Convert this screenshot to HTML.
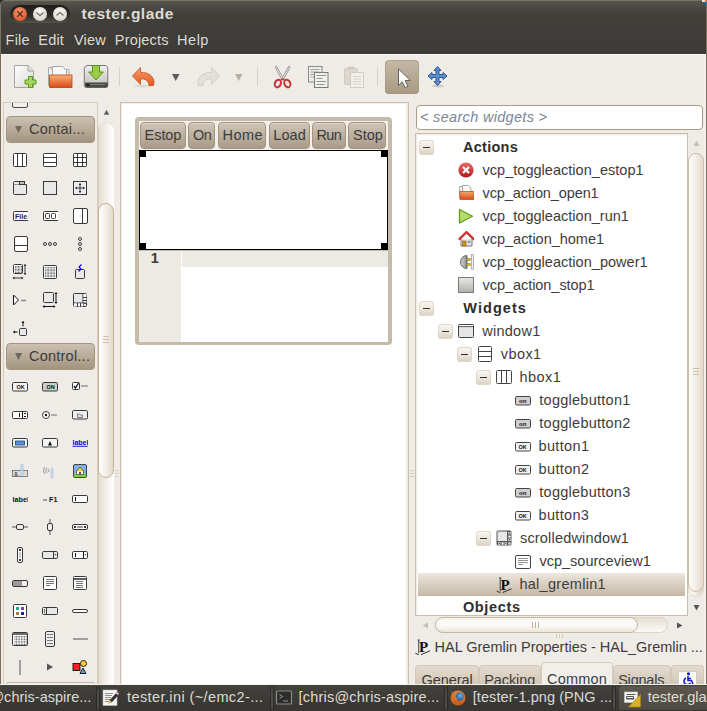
<!DOCTYPE html><html><head><meta charset="utf-8"><style>
html,body{margin:0;padding:0;}
body{width:707px;height:711px;overflow:hidden;position:relative;background:#efebe7;font-family:"Liberation Sans",sans-serif;}
div,span,svg{position:absolute;box-sizing:border-box;}
.t{white-space:nowrap;}
</style></head><body>
<div style="left:0px;top:0px;width:8px;height:8px;background:#2c2b28;"></div>
<div style="left:0px;top:0px;width:707px;height:54px;background:linear-gradient(#59564f 0px,#4d4b45 5px,#403f3a 14px,#3c3b37 53px,#2f2e2b 53px);border-radius:5px 5px 0 0;border-top:1px solid #7a7262;border-left:1px solid #7d7361;border-right:1px solid #7d7361;"></div>
<div style="left:1px;top:54px;width:705px;height:1px;background:#faf7f1;"></div>
<span class="t" style="left:81.61px;top:5.68px;font-size:15.5px;line-height:15.5px;color:#dfdbd2;letter-spacing:0.515px;font-weight:bold;">tester.glade</span>
<span class="t" style="left:5.61px;top:33.33px;font-size:14.5px;line-height:14.5px;color:#dfdbd2;letter-spacing:0.218px;">File</span>
<span class="t" style="left:38.31px;top:33.33px;font-size:14.5px;line-height:14.5px;color:#dfdbd2;letter-spacing:0.202px;">Edit</span>
<span class="t" style="left:73.94px;top:33.33px;font-size:14.5px;line-height:14.5px;color:#dfdbd2;letter-spacing:0.218px;">View</span>
<span class="t" style="left:114.81px;top:33.33px;font-size:14.5px;line-height:14.5px;color:#dfdbd2;letter-spacing:0.191px;">Projects</span>
<span class="t" style="left:177.11px;top:33.33px;font-size:14.5px;line-height:14.5px;color:#dfdbd2;letter-spacing:0.495px;">Help</span>
<div style="left:0px;top:54px;width:1px;height:631px;background:#7b6d56;"></div>
<div style="left:706px;top:54px;width:1px;height:631px;background:#7e7058;"></div>
<div style="left:705px;top:55px;width:1px;height:629px;background:#f7f4ef;"></div>
<div style="left:3px;top:102px;width:95px;height:582px;border:1px solid #d6ccb9;border-bottom:none;"></div>
<div style="left:98px;top:122px;width:16px;height:562px;background:linear-gradient(90deg,#d3c6b1 0px,#e6ded1 1.5px,#f3efe9 8px,#ffffff 15px);border-radius:8px 8px 0 0;box-shadow:inset 0 1px 0 #e9e2d6;"></div>
<div style="left:98px;top:203px;width:16px;height:275px;background:linear-gradient(90deg,#ffffff,#f3efe8 7px,#e2d9ca 14px);border:1px solid #c4b49a;border-radius:8px;"></div>
<svg style="left:103px;top:109px" width="7" height="7"><path d="M3.5 0.8L6.2 5.8H0.8z" fill="#5e5e5e"/></svg>
<div style="left:120px;top:102px;width:289px;height:582px;background:#fff;border:1px solid #cdbfa9;border-bottom:none;box-shadow:inset 1px 1px 0 #f1ede6,inset -2px 0 0 #f1ede6;"></div>
<div style="left:416px;top:105px;width:287px;height:25px;background:#fff;border:1px solid #a89c86;border-radius:4px;"></div>
<span class="t" style="left:419.97px;top:110.13px;font-size:14.5px;line-height:14.5px;color:#7c8593;letter-spacing:0.318px;font-style:italic;">&lt; search widgets &gt;</span>
<div style="left:415px;top:133px;width:273px;height:483px;background:#fff;border:1px solid #cbbfa9;box-shadow:inset 1px 1px 0 #f1ece4,inset 2px 2px 0 #fbf9f6;"></div>
<div style="left:688px;top:153px;width:16px;height:444px;background:linear-gradient(90deg,#fbfaf8,#f1ece4 50%,#dcd2c2);border-radius:8px;border:1px solid #e3dbce;"></div>
<div style="left:688px;top:153px;width:16px;height:439px;background:linear-gradient(90deg,#fdfcfb,#f5f1eb 40%,#e2d9cb);border:1px solid #cdbfa8;border-radius:8px;"></div>
<div style="left:435px;top:617px;width:233px;height:16px;background:linear-gradient(#e6dfd3,#fbfaf8);border-radius:8px;border:1px solid #ddd4c4;"></div>
<div style="left:435px;top:617px;width:203px;height:16px;background:linear-gradient(#f6f3ef,#fdfcfb 50%,#ebe5db);border:1px solid #c4b8a2;border-radius:8px;"></div>
<div style="left:418px;top:573px;width:267px;height:23px;background:linear-gradient(#ece6dc,#c4b7a5);"></div>
<span class="t" style="left:463.02px;top:139.73px;font-size:14.5px;line-height:14.5px;color:#2e2e2e;letter-spacing:0.267px;font-weight:bold;">Actions</span>
<span class="t" style="left:482.54px;top:162.73px;font-size:14.5px;line-height:14.5px;color:#3c3c3c;letter-spacing:0.028px;">vcp_toggleaction_estop1</span>
<span class="t" style="left:482.54px;top:185.73px;font-size:14.5px;line-height:14.5px;color:#3c3c3c;letter-spacing:-0.104px;">vcp_action_open1</span>
<span class="t" style="left:482.54px;top:208.73px;font-size:14.5px;line-height:14.5px;color:#3c3c3c;letter-spacing:0.023px;">vcp_toggleaction_run1</span>
<span class="t" style="left:482.54px;top:231.73px;font-size:14.5px;line-height:14.5px;color:#3c3c3c;letter-spacing:-0.017px;">vcp_action_home1</span>
<span class="t" style="left:482.54px;top:254.73px;font-size:14.5px;line-height:14.5px;color:#3c3c3c;letter-spacing:0.027px;">vcp_toggleaction_power1</span>
<span class="t" style="left:482.54px;top:277.73px;font-size:14.5px;line-height:14.5px;color:#3c3c3c;letter-spacing:-0.048px;">vcp_action_stop1</span>
<span class="t" style="left:463.37px;top:300.73px;font-size:14.5px;line-height:14.5px;color:#2e2e2e;letter-spacing:1.041px;font-weight:bold;">Widgets</span>
<span class="t" style="left:482.23px;top:323.73px;font-size:14.5px;line-height:14.5px;color:#3c3c3c;letter-spacing:0.260px;">window1</span>
<span class="t" style="left:500.84px;top:346.73px;font-size:14.5px;line-height:14.5px;color:#3c3c3c;letter-spacing:0.417px;">vbox1</span>
<span class="t" style="left:519.38px;top:369.73px;font-size:14.5px;line-height:14.5px;color:#3c3c3c;letter-spacing:0.453px;">hbox1</span>
<span class="t" style="left:539.30px;top:392.73px;font-size:14.5px;line-height:14.5px;color:#3c3c3c;letter-spacing:0.261px;">togglebutton1</span>
<span class="t" style="left:539.30px;top:415.73px;font-size:14.5px;line-height:14.5px;color:#3c3c3c;letter-spacing:0.263px;">togglebutton2</span>
<span class="t" style="left:538.57px;top:438.73px;font-size:14.5px;line-height:14.5px;color:#3c3c3c;letter-spacing:0.342px;">button1</span>
<span class="t" style="left:538.57px;top:461.73px;font-size:14.5px;line-height:14.5px;color:#3c3c3c;letter-spacing:0.347px;">button2</span>
<span class="t" style="left:539.30px;top:484.73px;font-size:14.5px;line-height:14.5px;color:#3c3c3c;letter-spacing:0.256px;">togglebutton3</span>
<span class="t" style="left:538.57px;top:507.73px;font-size:14.5px;line-height:14.5px;color:#3c3c3c;letter-spacing:0.332px;">button3</span>
<span class="t" style="left:519.99px;top:530.73px;font-size:14.5px;line-height:14.5px;color:#3c3c3c;letter-spacing:0.181px;">scrolledwindow1</span>
<span class="t" style="left:539.44px;top:553.73px;font-size:14.5px;line-height:14.5px;color:#3c3c3c;letter-spacing:0.010px;">vcp_sourceview1</span>
<span class="t" style="left:519.38px;top:576.73px;font-size:14.5px;line-height:14.5px;color:#3c3c3c;letter-spacing:0.289px;">hal_gremlin1</span>
<span class="t" style="left:462.92px;top:599.73px;font-size:14.5px;line-height:14.5px;color:#2e2e2e;letter-spacing:0.662px;font-weight:bold;">Objects</span>
<span class="t" style="left:434.61px;top:639.53px;font-size:14.5px;line-height:14.5px;color:#3c3c3c;letter-spacing:-0.010px;">HAL Gremlin Properties - HAL_Gremlin ...</span>
<div style="left:415px;top:665px;width:64px;height:19px;background:linear-gradient(#e3dbcf,#d3c8b7);border:1px solid #d3c8b6;border-bottom:none;border-radius:4px 4px 0 0;"></div>
<div style="left:479px;top:665px;width:62px;height:19px;background:linear-gradient(#e3dbcf,#d3c8b7);border:1px solid #d3c8b6;border-bottom:none;border-radius:4px 4px 0 0;"></div>
<div style="left:541px;top:662px;width:72px;height:22px;background:#f2efeb;border:1px solid #d6ccbc;border-bottom:none;border-radius:4px 4px 0 0;"></div>
<div style="left:613px;top:665px;width:58px;height:19px;background:linear-gradient(#e3dbcf,#d3c8b7);border:1px solid #d3c8b6;border-bottom:none;border-radius:4px 4px 0 0;"></div>
<div style="left:671px;top:665px;width:33px;height:19px;background:linear-gradient(#e3dbcf,#d3c8b7);border:1px solid #d3c8b6;border-bottom:none;border-radius:4px 4px 0 0;"></div>
<span class="t" style="left:421.57px;top:672.73px;font-size:14.5px;line-height:14.5px;color:#3c3c3c;letter-spacing:-0.085px;">General</span>
<span class="t" style="left:484.31px;top:672.73px;font-size:14.5px;line-height:14.5px;color:#3c3c3c;letter-spacing:-0.112px;">Packing</span>
<span class="t" style="left:547.07px;top:671.73px;font-size:14.5px;line-height:14.5px;color:#3c3c3c;letter-spacing:0.208px;">Common</span>
<span class="t" style="left:618.13px;top:672.73px;font-size:14.5px;line-height:14.5px;color:#3c3c3c;letter-spacing:-0.195px;">Signals</span>
<div style="left:135px;top:117px;width:257px;height:228px;background:#c6baa9;border-radius:4px;"></div>
<div style="left:139px;top:121px;width:249px;height:29px;background:#f3f0eb;"></div>
<div style="left:140.4px;top:122px;width:45.19999999999999px;height:27px;background:linear-gradient(#cfc5b7,#a99b87);border:1px solid #a09380;border-radius:4px;box-shadow:inset 0 1px 0 #ddd5c9;"></div>
<span class="t" style="left:144.61px;top:127.73px;font-size:14.5px;line-height:14.5px;color:#3c3c3c;letter-spacing:-0.073px;">Estop</span>
<div style="left:188.2px;top:122px;width:27.200000000000017px;height:27px;background:linear-gradient(#cfc5b7,#a99b87);border:1px solid #a09380;border-radius:4px;box-shadow:inset 0 1px 0 #ddd5c9;"></div>
<span class="t" style="left:193.00px;top:127.73px;font-size:14.5px;line-height:14.5px;color:#3c3c3c;letter-spacing:-0.619px;">On</span>
<div style="left:218.2px;top:122px;width:48.19999999999999px;height:27px;background:linear-gradient(#cfc5b7,#a99b87);border:1px solid #a09380;border-radius:4px;box-shadow:inset 0 1px 0 #ddd5c9;"></div>
<span class="t" style="left:222.41px;top:127.73px;font-size:14.5px;line-height:14.5px;color:#3c3c3c;letter-spacing:0.514px;">Home</span>
<div style="left:269.4px;top:122px;width:40.30000000000001px;height:27px;background:linear-gradient(#cfc5b7,#a99b87);border:1px solid #a09380;border-radius:4px;box-shadow:inset 0 1px 0 #ddd5c9;"></div>
<span class="t" style="left:273.31px;top:127.73px;font-size:14.5px;line-height:14.5px;color:#3c3c3c;letter-spacing:0.090px;">Load</span>
<div style="left:312.3px;top:122px;width:33.5px;height:27px;background:linear-gradient(#cfc5b7,#a99b87);border:1px solid #a09380;border-radius:4px;box-shadow:inset 0 1px 0 #ddd5c9;"></div>
<span class="t" style="left:316.41px;top:127.73px;font-size:14.5px;line-height:14.5px;color:#3c3c3c;letter-spacing:-0.588px;">Run</span>
<div style="left:348.4px;top:122px;width:38.10000000000002px;height:27px;background:linear-gradient(#cfc5b7,#a99b87);border:1px solid #a09380;border-radius:4px;box-shadow:inset 0 1px 0 #ddd5c9;"></div>
<span class="t" style="left:353.03px;top:127.73px;font-size:14.5px;line-height:14.5px;color:#3c3c3c;letter-spacing:0.012px;">Stop</span>
<div style="left:139px;top:150px;width:249px;height:100px;background:#fff;border:1px solid #000;"></div>
<div style="left:139px;top:150px;width:7px;height:7px;background:#000;"></div>
<div style="left:381px;top:150px;width:7px;height:7px;background:#000;"></div>
<div style="left:139px;top:243px;width:7px;height:7px;background:#000;"></div>
<div style="left:381px;top:243px;width:7px;height:7px;background:#000;"></div>
<div style="left:139px;top:251px;width:42px;height:91px;background:#ede9e3;"></div>
<div style="left:182px;top:251px;width:206px;height:16px;background:#ede9e3;"></div>
<div style="left:181px;top:251px;width:1px;height:91px;background:#fff;"></div>
<div style="left:181px;top:267px;width:207px;height:75px;background:#fff;"></div>
<span class="t" style="left:150.70px;top:250.63px;font-size:14.5px;line-height:14.5px;color:#3c3b37;font-weight:bold;">1</span>
<div style="left:6px;top:116px;width:89px;height:27px;background:linear-gradient(#cbc1b2,#a3957f);border:1px solid #a5977f;border-radius:4px;"></div>
<svg style="left:14px;top:125px" width="9" height="9"><path d="M1 1 L8 1 L4.5 8 Z" fill="#6e675d"/></svg>
<span class="t" style="left:28.97px;top:122.13px;font-size:14.5px;line-height:14.5px;color:#3c3c3c;letter-spacing:0.233px;">Contai...</span>
<div style="left:6px;top:343px;width:89px;height:27px;background:linear-gradient(#cbc1b2,#a3957f);border:1px solid #a5977f;border-radius:4px;"></div>
<svg style="left:14px;top:352px" width="9" height="9"><path d="M1 1 L8 1 L4.5 8 Z" fill="#6e675d"/></svg>
<span class="t" style="left:28.97px;top:349.13px;font-size:14.5px;line-height:14.5px;color:#3c3c3c;letter-spacing:0.235px;">Control...</span>
<div style="left:6px;top:682px;width:89px;height:4px;border:1px solid #c3b7a3;border-radius:4px;"></div>
<div style="left:0px;top:685px;width:707px;height:26px;background:linear-gradient(#42413c,#3a3935 60%,#363531);"></div>
<div style="left:0px;top:684px;width:707px;height:1px;background:#f4f2ee;"></div>
<div style="left:619px;top:686px;width:88px;height:24px;background:linear-gradient(#5d574e,#4e4a43);border-radius:4px 0 0 0;"></div>
<div style="left:96px;top:686px;width:1px;height:25px;background:#2c2b28;"></div>
<div style="left:97px;top:687px;width:2px;height:23px;background:linear-gradient(#3f3e3a,#4e4d48 20%,#4e4d48 80%,#3f3e3a);"></div>
<div style="left:99px;top:686px;width:1px;height:25px;background:#2c2b28;"></div>
<div style="left:270px;top:686px;width:1px;height:25px;background:#2c2b28;"></div>
<div style="left:271px;top:687px;width:2px;height:23px;background:linear-gradient(#3f3e3a,#4e4d48 20%,#4e4d48 80%,#3f3e3a);"></div>
<div style="left:273px;top:686px;width:1px;height:25px;background:#2c2b28;"></div>
<div style="left:444px;top:686px;width:1px;height:25px;background:#2c2b28;"></div>
<div style="left:445px;top:687px;width:2px;height:23px;background:linear-gradient(#3f3e3a,#4e4d48 20%,#4e4d48 80%,#3f3e3a);"></div>
<div style="left:447px;top:686px;width:1px;height:25px;background:#2c2b28;"></div>
<div style="left:612px;top:686px;width:1px;height:25px;background:#2c2b28;"></div>
<div style="left:613px;top:687px;width:2px;height:23px;background:linear-gradient(#3f3e3a,#4e4d48 20%,#4e4d48 80%,#3f3e3a);"></div>
<div style="left:615px;top:686px;width:1px;height:25px;background:#2c2b28;"></div>
<svg style="left:0;top:684px" width="707" height="27" viewBox="0 684 707 27">
<defs><linearGradient id="ffo" x1="0" y1="0" x2="0" y2="1"><stop offset="0" stop-color="#e88a2a"/><stop offset="1" stop-color="#c8561a"/></linearGradient>
<radialGradient id="ffb" cx="0.6" cy="0.4" r="0.6"><stop offset="0" stop-color="#6ab0e0"/><stop offset="1" stop-color="#1f5a9a"/></radialGradient></defs>
<!-- text editor -->
<rect x="103" y="690" width="14" height="15.5" fill="#f4f4f2" stroke="#bbb" stroke-width="0.6"/>
<path d="M105 693.5h8M105 695.5h7M105 697.5h6M105 699.5h5M105 701.5h4" stroke="#777" stroke-width="0.8"/>
<path d="M108.5 703.5l1.2-3.5 6.5-7 2.2 2.2-6.5 7z" fill="#333"/>
<path d="M115.5 693l1.5-1.5 2.2 2.2-1.5 1.5z" fill="#e8a0d8"/>
<path d="M108.5 703.5l1.2-3.5 2.2 2.2z" fill="#e8d060"/>
<!-- terminal -->
<rect x="276.5" y="691" width="15" height="13" rx="1" fill="#2c2c2a" stroke="#8a8a86" stroke-width="1.2"/>
<path d="M279.5 694.5l3 2-3 2" fill="none" stroke="#aaa" stroke-width="0.9"/>
<path d="M283 701h5" stroke="#8a9aaa" stroke-width="1"/>
<!-- firefox -->
<circle cx="458" cy="698" r="7.5" fill="url(#ffo)"/>
<circle cx="459.5" cy="696.5" r="4.2" fill="url(#ffb)"/>
<path d="M451 691l3 3 3-1-1.5 4 2.5 2-3 2z" fill="#d8782a"/>
<!-- glade -->
<rect x="624.5" y="692" width="13" height="10.5" fill="#f6f6f4" stroke="#ccc" stroke-width="0.6"/>
<path d="M626.5 694.5h9M626.5 699h8M626.5 696.5h7v2h-7z" fill="none" stroke="#444" stroke-width="0.9"/>
<path d="M640.5 694.5v12.5h-12z" fill="#d8b020" stroke="#a88810" stroke-width="0.6"/>
</svg>
<span class="t" style="left:-10.63px;top:689.93px;font-size:14.5px;line-height:14.5px;color:#dfdbd2;letter-spacing:0.016px;">@chris-aspire...</span>
<span class="t" style="left:127.10px;top:689.93px;font-size:14.5px;line-height:14.5px;color:#dfdbd2;letter-spacing:0.391px;">tester.ini (~/emc2-...</span>
<span class="t" style="left:298.56px;top:689.93px;font-size:14.5px;line-height:14.5px;color:#dfdbd2;letter-spacing:0.209px;">[chris@chris-aspire...</span>
<span class="t" style="left:472.76px;top:689.93px;font-size:14.5px;line-height:14.5px;color:#dfdbd2;letter-spacing:0.070px;">[tester-1.png (PNG ...</span>
<span class="t" style="left:647.70px;top:689.93px;font-size:14.5px;line-height:14.5px;color:#dfdbd2;">tester.glade</span>
<svg style="left:12px;top:152px" width="16" height="16" viewBox="0 0 16 16"><rect x="1.5" y="1.5" width="13" height="13" rx="1" fill="#fff" stroke="#383838"/><path d="M5.5 2v12M10.5 2v12" stroke="#383838"/></svg>
<svg style="left:42px;top:152px" width="16" height="16" viewBox="0 0 16 16"><rect x="1.5" y="1.5" width="13" height="13" rx="1" fill="#fff" stroke="#383838"/><path d="M2 5.5h12M2 10.5h12" stroke="#383838"/></svg>
<svg style="left:72px;top:152px" width="16" height="16" viewBox="0 0 16 16"><rect x="1.5" y="1.5" width="13" height="13" rx="1" fill="#fff" stroke="#383838"/><path d="M5.5 2v12M10.5 2v12M2 5.5h12M2 10.5h12" stroke="#383838"/></svg>
<svg style="left:12px;top:180px" width="16" height="16" viewBox="0 0 16 16"><path d="M1.5 4.5h13v9a1 1 0 0 1-1 1h-11a1 1 0 0 1-1-1z" fill="#e8e8e8" stroke="#383838"/><path d="M1.5 4.5v-2a1 1 0 0 1 1-1h5l1 3" fill="#e8e8e8" stroke="#383838"/><rect x="7.5" y="1.5" width="5" height="3" fill="#bbb" stroke="#383838"/></svg>
<svg style="left:42px;top:180px" width="16" height="16" viewBox="0 0 16 16"><rect x="1.5" y="1.5" width="13" height="13" fill="#e8e8e8" stroke="#383838"/></svg>
<svg style="left:72px;top:180px" width="16" height="16" viewBox="0 0 16 16"><rect x="1.5" y="1.5" width="13" height="13" fill="#eee" stroke="#383838"/><path d="M8 3.5v9M3.5 8h9" stroke="#383838"/><path d="M8 3l-1.5 2h3zM8 13l-1.5-2h3zM3 8l2-1.5v3zM13 8l-2-1.5v3z" fill="#383838"/></svg>
<svg style="left:12px;top:208px" width="16" height="16" viewBox="0 0 16 16"><path d="M16 3.5H2.5a1 1 0 0 0-1 1v7a1 1 0 0 0 1 1H16" fill="#fff" stroke="#383838"/><text x="3" y="10.5" font-family="Liberation Sans" font-weight="bold" font-size="7" fill="#222">File</text></svg>
<svg style="left:42px;top:208px" width="16" height="16" viewBox="0 0 16 16"><path d="M16 3.5H2.5a1 1 0 0 0-1 1v7a1 1 0 0 0 1 1H16" fill="#fff" stroke="#383838"/><rect x="3.5" y="5.5" width="4" height="5" rx="1" fill="none" stroke="#383838"/><rect x="9.5" y="5.5" width="4" height="5" rx="1" fill="none" stroke="#383838"/></svg>
<svg style="left:72px;top:208px" width="16" height="16" viewBox="0 0 16 16"><rect x="1.5" y="0.5" width="14" height="15" rx="1.5" fill="#fff" stroke="#383838"/><path d="M10.5 1v14" stroke="#383838"/></svg>
<svg style="left:12px;top:236px" width="16" height="16" viewBox="0 0 16 16"><rect x="2.5" y="0.5" width="13" height="15" rx="1.5" fill="#fff" stroke="#383838"/><path d="M3 9.5h12" stroke="#383838"/></svg>
<svg style="left:42px;top:236px" width="16" height="16" viewBox="0 0 16 16"><circle cx="3" cy="8" r="1.5" fill="none" stroke="#383838"/><circle cx="8" cy="8" r="1.5" fill="none" stroke="#383838"/><circle cx="13" cy="8" r="1.5" fill="none" stroke="#383838"/></svg>
<svg style="left:72px;top:236px" width="16" height="16" viewBox="0 0 16 16"><circle cx="8" cy="3" r="1.5" fill="none" stroke="#383838"/><circle cx="8" cy="8" r="1.5" fill="none" stroke="#383838"/><circle cx="8" cy="13" r="1.5" fill="none" stroke="#383838"/></svg>
<svg style="left:12px;top:264px" width="16" height="16" viewBox="0 0 16 16"><rect x="1.5" y="0.5" width="9" height="9" rx="1" fill="#fff" stroke="#383838"/><rect x="3.0" y="2.0" width="0.9" height="0.9" fill="#444"/><rect x="4.5" y="2.0" width="0.9" height="0.9" fill="#444"/><rect x="6.0" y="2.0" width="0.9" height="0.9" fill="#444"/><rect x="7.5" y="2.0" width="0.9" height="0.9" fill="#444"/><rect x="9.0" y="2.0" width="0.9" height="0.9" fill="#444"/><rect x="3.0" y="3.5" width="0.9" height="0.9" fill="#444"/><rect x="4.5" y="3.5" width="0.9" height="0.9" fill="#444"/><rect x="6.0" y="3.5" width="0.9" height="0.9" fill="#444"/><rect x="7.5" y="3.5" width="0.9" height="0.9" fill="#444"/><rect x="9.0" y="3.5" width="0.9" height="0.9" fill="#444"/><rect x="3.0" y="5.0" width="0.9" height="0.9" fill="#444"/><rect x="4.5" y="5.0" width="0.9" height="0.9" fill="#444"/><rect x="6.0" y="5.0" width="0.9" height="0.9" fill="#444"/><rect x="7.5" y="5.0" width="0.9" height="0.9" fill="#444"/><rect x="9.0" y="5.0" width="0.9" height="0.9" fill="#444"/><rect x="3.0" y="6.5" width="0.9" height="0.9" fill="#444"/><rect x="4.5" y="6.5" width="0.9" height="0.9" fill="#444"/><rect x="6.0" y="6.5" width="0.9" height="0.9" fill="#444"/><rect x="7.5" y="6.5" width="0.9" height="0.9" fill="#444"/><rect x="9.0" y="6.5" width="0.9" height="0.9" fill="#444"/><rect x="3.0" y="8.0" width="0.9" height="0.9" fill="#444"/><rect x="4.5" y="8.0" width="0.9" height="0.9" fill="#444"/><rect x="6.0" y="8.0" width="0.9" height="0.9" fill="#444"/><rect x="7.5" y="8.0" width="0.9" height="0.9" fill="#444"/><rect x="9.0" y="8.0" width="0.9" height="0.9" fill="#444"/><path d="M13 0.5v10M1 14h10" stroke="#383838"/><path d="M13 0l-1.5 2h3zM13 11l-1.5-2h3zM0.5 14l2-1.5v3zM11.5 14l-2-1.5v3z" fill="#383838"/></svg>
<svg style="left:42px;top:264px" width="16" height="16" viewBox="0 0 16 16"><rect x="1.5" y="1.5" width="13" height="13" rx="1" fill="#fff" stroke="#383838"/><rect x="3.2" y="3.2" width="0.9" height="0.9" fill="#444"/><rect x="4.7" y="3.2" width="0.9" height="0.9" fill="#444"/><rect x="6.2" y="3.2" width="0.9" height="0.9" fill="#444"/><rect x="7.7" y="3.2" width="0.9" height="0.9" fill="#444"/><rect x="9.2" y="3.2" width="0.9" height="0.9" fill="#444"/><rect x="10.7" y="3.2" width="0.9" height="0.9" fill="#444"/><rect x="12.2" y="3.2" width="0.9" height="0.9" fill="#444"/><rect x="3.2" y="4.7" width="0.9" height="0.9" fill="#444"/><rect x="4.7" y="4.7" width="0.9" height="0.9" fill="#444"/><rect x="6.2" y="4.7" width="0.9" height="0.9" fill="#444"/><rect x="7.7" y="4.7" width="0.9" height="0.9" fill="#444"/><rect x="9.2" y="4.7" width="0.9" height="0.9" fill="#444"/><rect x="10.7" y="4.7" width="0.9" height="0.9" fill="#444"/><rect x="12.2" y="4.7" width="0.9" height="0.9" fill="#444"/><rect x="3.2" y="6.2" width="0.9" height="0.9" fill="#444"/><rect x="4.7" y="6.2" width="0.9" height="0.9" fill="#444"/><rect x="6.2" y="6.2" width="0.9" height="0.9" fill="#444"/><rect x="7.7" y="6.2" width="0.9" height="0.9" fill="#444"/><rect x="9.2" y="6.2" width="0.9" height="0.9" fill="#444"/><rect x="10.7" y="6.2" width="0.9" height="0.9" fill="#444"/><rect x="12.2" y="6.2" width="0.9" height="0.9" fill="#444"/><rect x="3.2" y="7.7" width="0.9" height="0.9" fill="#444"/><rect x="4.7" y="7.7" width="0.9" height="0.9" fill="#444"/><rect x="6.2" y="7.7" width="0.9" height="0.9" fill="#444"/><rect x="7.7" y="7.7" width="0.9" height="0.9" fill="#444"/><rect x="9.2" y="7.7" width="0.9" height="0.9" fill="#444"/><rect x="10.7" y="7.7" width="0.9" height="0.9" fill="#444"/><rect x="12.2" y="7.7" width="0.9" height="0.9" fill="#444"/><rect x="3.2" y="9.2" width="0.9" height="0.9" fill="#444"/><rect x="4.7" y="9.2" width="0.9" height="0.9" fill="#444"/><rect x="6.2" y="9.2" width="0.9" height="0.9" fill="#444"/><rect x="7.7" y="9.2" width="0.9" height="0.9" fill="#444"/><rect x="9.2" y="9.2" width="0.9" height="0.9" fill="#444"/><rect x="10.7" y="9.2" width="0.9" height="0.9" fill="#444"/><rect x="12.2" y="9.2" width="0.9" height="0.9" fill="#444"/><rect x="3.2" y="10.7" width="0.9" height="0.9" fill="#444"/><rect x="4.7" y="10.7" width="0.9" height="0.9" fill="#444"/><rect x="6.2" y="10.7" width="0.9" height="0.9" fill="#444"/><rect x="7.7" y="10.7" width="0.9" height="0.9" fill="#444"/><rect x="9.2" y="10.7" width="0.9" height="0.9" fill="#444"/><rect x="10.7" y="10.7" width="0.9" height="0.9" fill="#444"/><rect x="12.2" y="10.7" width="0.9" height="0.9" fill="#444"/><rect x="3.2" y="12.2" width="0.9" height="0.9" fill="#444"/><rect x="4.7" y="12.2" width="0.9" height="0.9" fill="#444"/><rect x="6.2" y="12.2" width="0.9" height="0.9" fill="#444"/><rect x="7.7" y="12.2" width="0.9" height="0.9" fill="#444"/><rect x="9.2" y="12.2" width="0.9" height="0.9" fill="#444"/><rect x="10.7" y="12.2" width="0.9" height="0.9" fill="#444"/><rect x="12.2" y="12.2" width="0.9" height="0.9" fill="#444"/></svg>
<svg style="left:72px;top:264px" width="16" height="16" viewBox="0 0 16 16"><rect x="3.5" y="5.5" width="9" height="9" rx="1" fill="#e8e8e8" stroke="#383838"/><path d="M9.5 0.5l-2.5 2.5 2 2-2.5 2.5" fill="none" stroke="#00f" stroke-width="1.1"/></svg>
<svg style="left:12px;top:292px" width="16" height="16" viewBox="0 0 16 16"><path d="M1.5 3v10l5-5z" fill="#fff" stroke="#111"/><path d="M9 8.5h5" stroke="#888" stroke-width="1.5"/></svg>
<svg style="left:42px;top:292px" width="16" height="16" viewBox="0 0 16 16"><rect x="1.5" y="0.5" width="10" height="10" rx="1" fill="#e8e8e8" stroke="#383838"/><path d="M14 1v10M1.5 14.5h11" stroke="#111"/><path d="M14 0l-1.5 2h3zM14 12l-1.5-2h3zM0.5 14.5l2-1.5v3zM13.5 14.5l-2-1.5v3z" fill="#111"/></svg>
<svg style="left:72px;top:292px" width="16" height="16" viewBox="0 0 16 16"><rect x="1.5" y="1.5" width="13" height="13" rx="1" fill="#e8e8e8" stroke="#383838"/><path d="M11 2v12M2 11h12" stroke="#383838" stroke-width="1"/><rect x="11.5" y="2" width="3" height="9" fill="#fff"/><rect x="2" y="11.5" width="9" height="3" fill="#fff"/><path d="M11 11h4M11 5.5h4M11 8.5h4M5.5 11v4M8.5 11v4" stroke="#383838"/></svg>
<svg style="left:12px;top:320px" width="16" height="16" viewBox="0 0 16 16"><rect x="7.5" y="8.5" width="7" height="7" rx="1" fill="#e8e8e8" stroke="#383838"/><path d="M11 1.5v5M1.5 12h4" stroke="#111"/><path d="M11 1l-1.5 2h3zM1 12l2-1.5v3z" fill="#111"/></svg>
<svg style="left:12px;top:379px" width="16" height="16" viewBox="0 0 16 16"><rect x="0.5" y="3.5" width="15" height="8.5" rx="1.2" fill="#f4f4f4" stroke="#383838"/><text x="4.5" y="10" font-family="Liberation Sans" font-weight="bold" font-size="5.5" fill="#111">OK</text></svg>
<svg style="left:42px;top:379px" width="16" height="16" viewBox="0 0 16 16"><rect x="0.5" y="3.5" width="15" height="8.5" rx="1.2" fill="#ccc" stroke="#383838"/><text x="4.5" y="10" font-family="Liberation Sans" font-weight="bold" font-size="5.5" fill="#111">ON</text></svg>
<svg style="left:72px;top:379px" width="16" height="16" viewBox="0 0 16 16"><rect x="0.5" y="3.5" width="7" height="7" rx="1" fill="#fff" stroke="#383838"/><path d="M2 7l1.5 2 3-5" fill="none" stroke="#111" stroke-width="1.3"/><path d="M9 7h7" stroke="#999" stroke-width="1.5"/></svg>
<svg style="left:12px;top:407px" width="16" height="16" viewBox="0 0 16 16"><rect x="0.5" y="4.5" width="15" height="7" rx="1" fill="#fff" stroke="#383838"/><path d="M7.5 6v4M10.5 5v6" stroke="#111"/><path d="M12 6.5h2M12 9.5h2" stroke="#111"/></svg>
<svg style="left:42px;top:407px" width="16" height="16" viewBox="0 0 16 16"><circle cx="4" cy="8" r="3.5" fill="#fff" stroke="#383838"/><circle cx="4" cy="8" r="1.2" fill="#111"/><path d="M9 8h6" stroke="#999" stroke-width="1.5"/></svg>
<svg style="left:72px;top:407px" width="16" height="16" viewBox="0 0 16 16"><rect x="0.5" y="3.5" width="15" height="8.5" rx="1.2" fill="#eee" stroke="#383838"/><path d="M5.5 7h2l1 1h2v2.5h-5z" fill="#ddd" stroke="#666" stroke-width="0.8"/></svg>
<svg style="left:12px;top:435px" width="16" height="16" viewBox="0 0 16 16"><rect x="0.5" y="3.5" width="15" height="8.5" rx="1.2" fill="#f4f4f4" stroke="#383838"/><rect x="3.5" y="6" width="9" height="4" fill="#5a8fd6" stroke="#1a4f96" stroke-width="0.8"/></svg>
<svg style="left:42px;top:435px" width="16" height="16" viewBox="0 0 16 16"><rect x="0.5" y="3.5" width="15" height="8.5" rx="1.2" fill="#f4f4f4" stroke="#383838"/><path d="M6 10.5l2-4.5 2 4.5z" fill="#111"/></svg>
<svg style="left:72px;top:435px" width="16" height="16" viewBox="0 0 16 16"><text x="0.5" y="10" font-family="Liberation Sans" font-weight="bold" font-size="7" fill="#0000ee">label</text><path d="M0.5 11.3h15" stroke="#00e" stroke-width="0.9"/></svg>
<svg style="left:12px;top:463px" width="16" height="16" viewBox="0 0 16 16"><rect x="0.5" y="7.5" width="15" height="6" fill="#ddd" stroke="#666" stroke-width="0.8"/><text x="2.5" y="12.5" font-family="Liberation Sans" font-weight="bold" font-size="5" fill="#333">0.</text><rect x="9" y="1" width="2" height="11" rx="1" fill="#cde" stroke="#9bd" stroke-width="0.6"/></svg>
<svg style="left:42px;top:463px" width="16" height="16" viewBox="0 0 16 16"><path d="M3 4a5 5 0 0 0 0 7M5 5a3.5 3.5 0 0 0 0 5M7 6a2 2 0 0 0 0 3" fill="none" stroke="#8a8aa0" stroke-width="0.9"/><rect x="9" y="5" width="2" height="10" rx="1" fill="#dde" stroke="#9bd" stroke-width="0.6"/></svg>
<svg style="left:72px;top:463px" width="16" height="16" viewBox="0 0 16 16"><rect x="1.5" y="1.5" width="13" height="13" rx="1.5" fill="#7eb4ee" stroke="#444"/><rect x="2" y="10" width="12" height="4" fill="#7ad33d"/><path d="M4.5 8l3.5-3.5 3.5 3.5v3.5h-7z" fill="#fff" stroke="#553" stroke-width="0.8"/><path d="M4 8.5l4-4.5 4 4.5" fill="#f5d23c" stroke="#553" stroke-width="0.8"/><rect x="7" y="9" width="2" height="2.5" fill="#553"/></svg>
<svg style="left:12px;top:491px" width="16" height="16" viewBox="0 0 16 16"><text x="0.5" y="10.5" font-family="Liberation Sans" font-weight="bold" font-size="7.2" fill="#111">label</text></svg>
<svg style="left:42px;top:491px" width="16" height="16" viewBox="0 0 16 16"><path d="M1 9h4" stroke="#888" stroke-width="1.5"/><text x="7" y="11" font-family="Liberation Sans" font-weight="bold" font-size="7.2" fill="#111">F1</text></svg>
<svg style="left:72px;top:491px" width="16" height="16" viewBox="0 0 16 16"><rect x="0.5" y="4.5" width="15" height="7" rx="1.2" fill="#fff" stroke="#383838"/><path d="M3.5 6v4" stroke="#111"/></svg>
<svg style="left:12px;top:519px" width="16" height="16" viewBox="0 0 16 16"><path d="M0 8h16" stroke="#888" stroke-width="1.5"/><rect x="4.5" y="5.5" width="7" height="5" rx="1.5" fill="#eee" stroke="#383838"/></svg>
<svg style="left:42px;top:519px" width="16" height="16" viewBox="0 0 16 16"><path d="M8 0v16" stroke="#888" stroke-width="1.5"/><rect x="5.5" y="4.5" width="5" height="7" rx="1.5" fill="#eee" stroke="#383838"/></svg>
<svg style="left:72px;top:519px" width="16" height="16" viewBox="0 0 16 16"><rect x="0.5" y="5.5" width="15" height="5" rx="1.5" fill="#fff" stroke="#383838"/><rect x="2" y="7" width="2" height="2" fill="#333"/><rect x="12" y="7" width="2" height="2" fill="#333"/><path d="M5 8h6" stroke="#999" stroke-width="2"/></svg>
<svg style="left:12px;top:547px" width="16" height="16" viewBox="0 0 16 16"><rect x="5.5" y="0.5" width="5" height="15" rx="1.5" fill="#fff" stroke="#383838"/><rect x="7" y="2" width="2" height="2" fill="#333"/><rect x="7" y="12" width="2" height="2" fill="#333"/><path d="M8 5v6" stroke="#ccc" stroke-width="2"/></svg>
<svg style="left:42px;top:547px" width="16" height="16" viewBox="0 0 16 16"><rect x="0.5" y="4.5" width="15" height="7" rx="1.2" fill="#e8e8e8" stroke="#383838"/><path d="M11.5 5v6" stroke="#383838"/><path d="M12.5 7.2h2l-1 1.3z" fill="#111"/></svg>
<svg style="left:72px;top:547px" width="16" height="16" viewBox="0 0 16 16"><rect x="0.5" y="4.5" width="15" height="7" rx="1.2" fill="#fff" stroke="#383838"/><path d="M11.5 5v6M3.5 6v4" stroke="#111"/><path d="M12.5 7.2h2l-1 1.3z" fill="#111"/></svg>
<svg style="left:12px;top:575px" width="16" height="16" viewBox="0 0 16 16"><rect x="0.5" y="5.5" width="15" height="6" rx="1.5" fill="#eee" stroke="#383838"/><rect x="1" y="6" width="9" height="5" fill="#999"/></svg>
<svg style="left:42px;top:575px" width="16" height="16" viewBox="0 0 16 16"><rect x="1.5" y="1.5" width="13" height="13" rx="1" fill="#fff" stroke="#383838"/><path d="M4 4.5h8M4 6.5h8M4 8.5h8M4 10.5h4" stroke="#777" stroke-width="1"/></svg>
<svg style="left:72px;top:575px" width="16" height="16" viewBox="0 0 16 16"><rect x="1.5" y="1.5" width="13" height="13" rx="1" fill="#fff" stroke="#383838"/><path d="M2 4h12" stroke="#383838" stroke-width="1.6"/><path d="M4 6.5h7M4 8.5h7M4 10.5h7M4 12.5h7" stroke="#777" stroke-width="1"/></svg>
<svg style="left:12px;top:603px" width="16" height="16" viewBox="0 0 16 16"><rect x="1.5" y="1.5" width="13" height="13" rx="1" fill="#fff" stroke="#383838"/><rect x="4" y="4" width="3" height="3" fill="#2a9"/><rect x="9" y="4" width="3" height="3" fill="#74a"/><rect x="4" y="9" width="3" height="3" fill="#a75"/><rect x="9" y="9" width="3" height="3" fill="#228"/></svg>
<svg style="left:42px;top:603px" width="16" height="16" viewBox="0 0 16 16"><rect x="0.5" y="4.5" width="15" height="7" rx="1" fill="#e8e8e8" stroke="#383838"/><path d="M4.5 5v6" stroke="#383838"/><rect x="2" y="6.5" width="1" height="1" fill="#111"/><rect x="2" y="8.5" width="1" height="1" fill="#111"/></svg>
<svg style="left:72px;top:603px" width="16" height="16" viewBox="0 0 16 16"><rect x="0.5" y="6.5" width="15" height="3" rx="1.5" fill="#fff" stroke="#383838"/></svg>
<svg style="left:12px;top:631px" width="16" height="16" viewBox="0 0 16 16"><rect x="0.5" y="1.5" width="15" height="13" rx="1" fill="#fff" stroke="#383838"/><path d="M1 3h14" stroke="#383838" stroke-width="1.5"/><rect x="2.5" y="5.0" width="0.9" height="0.9" fill="#444"/><rect x="4.1" y="5.0" width="0.9" height="0.9" fill="#444"/><rect x="5.7" y="5.0" width="0.9" height="0.9" fill="#444"/><rect x="7.3" y="5.0" width="0.9" height="0.9" fill="#444"/><rect x="8.9" y="5.0" width="0.9" height="0.9" fill="#444"/><rect x="10.5" y="5.0" width="0.9" height="0.9" fill="#444"/><rect x="12.1" y="5.0" width="0.9" height="0.9" fill="#444"/><rect x="13.7" y="5.0" width="0.9" height="0.9" fill="#444"/><rect x="2.5" y="6.6" width="0.9" height="0.9" fill="#444"/><rect x="4.1" y="6.6" width="0.9" height="0.9" fill="#444"/><rect x="5.7" y="6.6" width="0.9" height="0.9" fill="#444"/><rect x="7.3" y="6.6" width="0.9" height="0.9" fill="#444"/><rect x="8.9" y="6.6" width="0.9" height="0.9" fill="#444"/><rect x="10.5" y="6.6" width="0.9" height="0.9" fill="#444"/><rect x="12.1" y="6.6" width="0.9" height="0.9" fill="#444"/><rect x="13.7" y="6.6" width="0.9" height="0.9" fill="#444"/><rect x="2.5" y="8.2" width="0.9" height="0.9" fill="#444"/><rect x="4.1" y="8.2" width="0.9" height="0.9" fill="#444"/><rect x="5.7" y="8.2" width="0.9" height="0.9" fill="#444"/><rect x="7.3" y="8.2" width="0.9" height="0.9" fill="#444"/><rect x="8.9" y="8.2" width="0.9" height="0.9" fill="#444"/><rect x="10.5" y="8.2" width="0.9" height="0.9" fill="#444"/><rect x="12.1" y="8.2" width="0.9" height="0.9" fill="#444"/><rect x="13.7" y="8.2" width="0.9" height="0.9" fill="#444"/><rect x="2.5" y="9.8" width="0.9" height="0.9" fill="#444"/><rect x="4.1" y="9.8" width="0.9" height="0.9" fill="#444"/><rect x="5.7" y="9.8" width="0.9" height="0.9" fill="#444"/><rect x="7.3" y="9.8" width="0.9" height="0.9" fill="#444"/><rect x="8.9" y="9.8" width="0.9" height="0.9" fill="#444"/><rect x="10.5" y="9.8" width="0.9" height="0.9" fill="#444"/><rect x="12.1" y="9.8" width="0.9" height="0.9" fill="#444"/><rect x="13.7" y="9.8" width="0.9" height="0.9" fill="#444"/><rect x="2.5" y="11.4" width="0.9" height="0.9" fill="#444"/><rect x="4.1" y="11.4" width="0.9" height="0.9" fill="#444"/><rect x="5.7" y="11.4" width="0.9" height="0.9" fill="#444"/><rect x="7.3" y="11.4" width="0.9" height="0.9" fill="#444"/><rect x="8.9" y="11.4" width="0.9" height="0.9" fill="#444"/><rect x="10.5" y="11.4" width="0.9" height="0.9" fill="#444"/><rect x="12.1" y="11.4" width="0.9" height="0.9" fill="#444"/><rect x="13.7" y="11.4" width="0.9" height="0.9" fill="#444"/><rect x="2.5" y="13.0" width="0.9" height="0.9" fill="#444"/><rect x="4.1" y="13.0" width="0.9" height="0.9" fill="#444"/><rect x="5.7" y="13.0" width="0.9" height="0.9" fill="#444"/><rect x="7.3" y="13.0" width="0.9" height="0.9" fill="#444"/><rect x="8.9" y="13.0" width="0.9" height="0.9" fill="#444"/><rect x="10.5" y="13.0" width="0.9" height="0.9" fill="#444"/><rect x="12.1" y="13.0" width="0.9" height="0.9" fill="#444"/><rect x="13.7" y="13.0" width="0.9" height="0.9" fill="#444"/></svg>
<svg style="left:42px;top:631px" width="16" height="16" viewBox="0 0 16 16"><rect x="3.5" y="0.5" width="9" height="15" rx="1.5" fill="#eee" stroke="#383838"/><path d="M5 3.5h6M5 6.5h6M5 9.5h6M5 12.5h6" stroke="#777" stroke-width="1"/></svg>
<svg style="left:72px;top:631px" width="16" height="16" viewBox="0 0 16 16"><path d="M1 8h15" stroke="#555" stroke-width="1"/></svg>
<svg style="left:12px;top:659px" width="16" height="16" viewBox="0 0 16 16"><path d="M8 1v15" stroke="#555" stroke-width="1"/></svg>
<svg style="left:42px;top:659px" width="16" height="16" viewBox="0 0 16 16"><path d="M5 4.5l6 3.5-6 3.5z" fill="#555"/></svg>
<svg style="left:72px;top:659px" width="16" height="16" viewBox="0 0 16 16"><rect x="1" y="4.5" width="7" height="7" fill="#e22" stroke="#111" stroke-width="0.9"/><path d="M11 9l-3 5.5h6z" fill="#69c" stroke="#111" stroke-width="0.9"/><circle cx="11.5" cy="4.5" r="3" fill="#fc3" stroke="#111" stroke-width="0.9"/></svg>
<div style="left:11px;top:103px;width:18px;height:6px;overflow:hidden;"><svg style="left:1px;top:-10px" width="16" height="16"><rect x="0.5" y="0.5" width="15" height="14" rx="1.5" fill="#eee" stroke="#4a4a4a"/></svg></div>
<svg style="left:0;top:0" width="80" height="28">
<defs>
<radialGradient id="gc" cx="0.45" cy="0.35" r="0.7"><stop offset="0" stop-color="#f79a6e"/><stop offset="1" stop-color="#d9502a"/></radialGradient>
<radialGradient id="gw" cx="0.45" cy="0.35" r="0.7"><stop offset="0" stop-color="#fbfaf7"/><stop offset="1" stop-color="#d6d1c6"/></radialGradient>
<linearGradient id="cap" x1="0" y1="0" x2="0" y2="1"><stop offset="0" stop-color="#1e1d1a"/><stop offset="0.6" stop-color="#2e2d29"/><stop offset="1" stop-color="#55524b"/></linearGradient>
</defs>
<rect x="10" y="5" width="60" height="18" rx="9" fill="url(#cap)"/>
<circle cx="20" cy="14" r="7" fill="url(#gc)"/>
<path d="M17.3 11.3l5.4 5.4M22.7 11.3l-5.4 5.4" stroke="#4a2a1a" stroke-width="1.3"/>
<circle cx="40" cy="14" r="7" fill="url(#gw)"/>
<path d="M36.5 12.5l3.5 3 3.5-3" fill="none" stroke="#7a7770" stroke-width="1.5"/>
<circle cx="60" cy="14" r="7" fill="url(#gw)"/>
<path d="M56.5 15.5l3.5-3 3.5 3" fill="none" stroke="#7a7770" stroke-width="1.5"/>
</svg>
<svg style="left:0;top:53px" width="460" height="48" viewBox="0 53 460 48">
<defs>
<linearGradient id="pg" x1="0" y1="0" x2="1" y2="1"><stop offset="0" stop-color="#ffffff"/><stop offset="1" stop-color="#d8d8d6"/></linearGradient>
<linearGradient id="og" x1="0" y1="0" x2="0" y2="1"><stop offset="0" stop-color="#f6b27a"/><stop offset="1" stop-color="#dd4814"/></linearGradient>
<linearGradient id="hg" x1="0" y1="0" x2="0" y2="1"><stop offset="0" stop-color="#f2f2f0"/><stop offset="1" stop-color="#b9b9b6"/></linearGradient>
<linearGradient id="ug" x1="0" y1="0" x2="0" y2="1"><stop offset="0" stop-color="#f8a070"/><stop offset="1" stop-color="#e2581c"/></linearGradient>
<linearGradient id="bt" x1="0" y1="0" x2="0" y2="1"><stop offset="0" stop-color="#c5b8a5"/><stop offset="1" stop-color="#a89a84"/></linearGradient>
</defs>
<!-- new -->
<path d="M14.5 65.5h13.5l5.5 5.5v16.5h-19z" fill="url(#pg)" stroke="#a4a4a2"/>
<path d="M28 65.5v5.5h5.5" fill="#e4e4e2" stroke="#a4a4a2"/>
<path d="M28.5 76.5h4v3.5h3.5v4h-3.5v3.5h-4v-3.5h-3.5v-4h3.5z" fill="#a5d45f" stroke="#5a9a18"/>
<!-- open -->
<path d="M48.5 67.5h11l4 4v14h-15z" fill="#f2f2f2" stroke="#a8a8a8"/>
<path d="M52.5 66.5h10l4 4v13h-14z" fill="#f8f8f8" stroke="#a8a8a8"/>
<path d="M66 69.5h3v15" fill="none" stroke="#b0b0b0"/>
<rect x="50.5" y="68.5" width="2" height="1" fill="#f0a050"/>
<path d="M49.5 75h22.5v12.5h-22.5z" fill="url(#og)" stroke="#c23d0c" stroke-width="0.8"/>
<!-- save -->
<path d="M86.5 65.5h19.5l1.8 2.5v17.5a2 2 0 0 1-2 2h-19.5a2 2 0 0 1-2-2v-17.5z" fill="url(#hg)" stroke="#7a7a78"/>
<path d="M85 82.5h22.8v3a2 2 0 0 1-2 2h-18.8a2 2 0 0 1-2-2z" fill="#484846"/>
<path d="M88 84.5h17" stroke="#8a8a88" stroke-width="0.8"/>
<rect x="86.5" y="84" width="3" height="1.5" fill="#111"/>
<ellipse cx="96" cy="74" rx="8.5" ry="6.5" fill="none" stroke="#d8d8d4"/>
<path d="M92.5 65.5h7v6.5h3.8l-7.3 8-7.3-8h3.8z" fill="#9bcc44" stroke="#4e8a10" stroke-width="0.9"/>
<!-- separator -->
<rect x="119" y="67" width="1" height="19" fill="#d8d0c3"/>
<!-- undo -->
<path d="M132.5 76l8-8.5v5a12 10 0 0 1 13 13 h-4.5a7 6.5 0 0 0-8.5-6.5v5.5z" fill="url(#ug)" stroke="#c8501a" stroke-width="0.8"/>
<ellipse cx="143" cy="86" rx="9" ry="1.5" fill="#000" opacity="0.08"/>
<path d="M172 74h7.5l-3.75 7z" fill="#5c5c5c"/>
<!-- redo gray -->
<path d="M219.5 76l-8-8.5v5a12 10 0 0 0-13 13h4.5a7 6.5 0 0 1 8.5-6.5v5.5z" fill="#e3e0da" stroke="#cbc7bf" stroke-width="0.8"/>
<path d="M235 74h7.5l-3.75 7z" fill="#b8ae9e"/>
<rect x="257" y="67" width="1" height="19" fill="#d8d0c3"/>
<!-- cut -->
<path d="M276.3 66l-0.8 1.5 6 11.5h2.2z" fill="#f4f4f2" stroke="#8a8a88" stroke-width="0.9" stroke-linejoin="round"/>
<path d="M289 66l0.8 1.5-6 11.5h-2.2z" fill="#f4f4f2" stroke="#8a8a88" stroke-width="0.9" stroke-linejoin="round"/>
<ellipse cx="277.8" cy="83.4" rx="2.9" ry="3.9" transform="rotate(25 277.6 83.6)" fill="none" stroke="#c83434" stroke-width="2"/>
<ellipse cx="287.4" cy="83.4" rx="2.9" ry="3.9" transform="rotate(-25 287.6 83.6)" fill="none" stroke="#c83434" stroke-width="2"/>
<path d="M281 79.5h3.5" stroke="#c83434" stroke-width="1.6"/>
<!-- copy -->
<rect x="308.5" y="66.5" width="13.5" height="15.5" fill="#ededeb" stroke="#8a8a88"/>
<path d="M310.5 69.5h9M310.5 72h9M310.5 74.5h9M310.5 77h9" stroke="#9a9a98" stroke-width="0.9"/>
<rect x="314.5" y="72.5" width="13.5" height="15" fill="#f0f0ee" stroke="#7a7a78"/>
<path d="M316.5 75.5h9.5M316.5 78.5h6M316.5 81.5h9.5M316.5 84.5h8" stroke="#8a8a88" stroke-width="0.9"/>
<!-- paste gray -->
<rect x="344.5" y="68.5" width="13" height="16" rx="1" fill="#dcd8d0" stroke="#cfc9bf"/>
<rect x="348" y="66.5" width="6" height="3" fill="#cfc9bf"/>
<path d="M350.5 72.5h13v15h-13z" fill="#f1efea" stroke="#d2cdc3"/>
<path d="M353 76.5h8M353 79h8M353 81.5h8M353 84h8" stroke="#d6d1c8" stroke-width="0.9"/>
<rect x="377" y="67" width="1" height="19" fill="#d8d0c3"/>
<!-- select pressed -->
<rect x="385" y="60" width="34" height="34" rx="4" fill="url(#bt)"/>
<rect x="385.5" y="60.5" width="33" height="33" rx="3.5" fill="none" stroke="#a4967f" stroke-opacity="0.6"/>
<path d="M398.5 69v16.5l3.8-3.6 3 5.8 2.7-1.4-3-5.6 5.2-0.4z" fill="#fff" stroke="#555" stroke-width="0.9"/>
<!-- move -->
<path d="M437.5 66.5l3.5 4h-2v4h4v-2l4 3.5-4 3.5v-2h-4v4h2l-3.5 4-3.5-4h2v-4h-4v2l-4-3.5 4-3.5v2h4v-4h-2z" fill="#5b8fd4" stroke="#204a87" stroke-width="0.9"/>
<ellipse cx="438" cy="86" rx="6" ry="1.5" fill="#000" opacity="0.15"/>
</svg>
<div style="left:419px;top:140px;width:15px;height:15px;border-radius:3.5px;background:linear-gradient(#faf8f4,#e9e3d8 60%,#d9cfbf);box-shadow:inset 0 0 0 1px #e0d7c8;"></div>
<div style="left:423px;top:147px;width:7px;height:1.2px;background:#333;"></div>
<div style="left:419px;top:301px;width:15px;height:15px;border-radius:3.5px;background:linear-gradient(#faf8f4,#e9e3d8 60%,#d9cfbf);box-shadow:inset 0 0 0 1px #e0d7c8;"></div>
<div style="left:423px;top:308px;width:7px;height:1.2px;background:#333;"></div>
<div style="left:438px;top:324px;width:15px;height:15px;border-radius:3.5px;background:linear-gradient(#faf8f4,#e9e3d8 60%,#d9cfbf);box-shadow:inset 0 0 0 1px #e0d7c8;"></div>
<div style="left:442px;top:331px;width:7px;height:1.2px;background:#333;"></div>
<div style="left:457px;top:347px;width:15px;height:15px;border-radius:3.5px;background:linear-gradient(#faf8f4,#e9e3d8 60%,#d9cfbf);box-shadow:inset 0 0 0 1px #e0d7c8;"></div>
<div style="left:461px;top:354px;width:7px;height:1.2px;background:#333;"></div>
<div style="left:476px;top:370px;width:15px;height:15px;border-radius:3.5px;background:linear-gradient(#faf8f4,#e9e3d8 60%,#d9cfbf);box-shadow:inset 0 0 0 1px #e0d7c8;"></div>
<div style="left:480px;top:377px;width:7px;height:1.2px;background:#333;"></div>
<div style="left:476px;top:531px;width:15px;height:15px;border-radius:3.5px;background:linear-gradient(#faf8f4,#e9e3d8 60%,#d9cfbf);box-shadow:inset 0 0 0 1px #e0d7c8;"></div>
<div style="left:480px;top:538px;width:7px;height:1.2px;background:#333;"></div>
<svg style="left:458px;top:161.5px" width="16" height="16" viewBox="0 0 16 16"><defs><linearGradient id="re" x1="0" y1="0" x2="0" y2="1"><stop offset="0" stop-color="#f06a6a"/><stop offset="1" stop-color="#b21818"/></linearGradient></defs><circle cx="8" cy="8" r="7.6" fill="url(#re)"/><path d="M5 5l6 6M11 5l-6 6" stroke="#fff" stroke-width="2.2"/></svg>
<svg style="left:458px;top:184.5px" width="16" height="16" viewBox="0 0 16 16"><defs><linearGradient id="ro" x1="0" y1="0" x2="0" y2="1"><stop offset="0" stop-color="#f5a86f"/><stop offset="1" stop-color="#dc4a14"/></linearGradient></defs><path d="M1.5 1.5h7l2.5 2.5v9h-9.5z" fill="#f4f4f4" stroke="#aaa"/><path d="M4.5 0.5h6l2.5 2.5v6h-8.5z" fill="#fafafa" stroke="#aaa"/><rect x="2" y="6.5" width="14" height="8" fill="url(#ro)" stroke="#c94010" stroke-width="0.7"/></svg>
<svg style="left:458px;top:207.5px" width="16" height="16" viewBox="0 0 16 16"><path d="M1.5 1.5v13.5l13-6.75z" fill="#b6dd68" stroke="#5a9a18" stroke-width="1.2" stroke-linejoin="round"/></svg>
<svg style="left:458px;top:230.5px" width="16" height="16" viewBox="0 0 16 16"><path d="M3 8v7h11V8" fill="#e8e8e6" stroke="#777"/><path d="M0.8 8.6L8.5 1.2 16.2 8.6" fill="none" stroke="#c33" stroke-width="2.4"/><rect x="4.5" y="10" width="3.5" height="5" fill="#d88a1a" stroke="#8a5a10" stroke-width="0.6"/><rect x="10" y="10" width="2" height="2" fill="#8cc" stroke="#777" stroke-width="0.5"/></svg>
<svg style="left:458px;top:253.5px" width="16" height="16" viewBox="0 0 16 16"><defs><linearGradient id="rp" x1="0" y1="0" x2="1" y2="0"><stop offset="0" stop-color="#d8d8d6"/><stop offset="1" stop-color="#8a8a88"/></linearGradient></defs><path d="M9 1.5a6.5 6.5 0 0 0 0 13z" fill="url(#rp)" stroke="#555" stroke-width="0.9"/><rect x="9" y="4.5" width="3.5" height="2" fill="#e0c020" stroke="#8a7010" stroke-width="0.5"/><rect x="9" y="9.5" width="3.5" height="2" fill="#e0c020" stroke="#8a7010" stroke-width="0.5"/><rect x="13.5" y="0.5" width="2" height="15" fill="#eee" stroke="#999" stroke-width="0.7"/></svg>
<svg style="left:458px;top:276.5px" width="16" height="16" viewBox="0 0 16 16"><defs><linearGradient id="rs" x1="0" y1="0" x2="0" y2="1"><stop offset="0" stop-color="#e8e8e6"/><stop offset="1" stop-color="#b0b0ad"/></linearGradient></defs><rect x="0.5" y="0.5" width="15" height="15" fill="url(#rs)" stroke="#7a7a78"/></svg>
<svg style="left:458px;top:323px" width="16" height="16" viewBox="0 0 16 16"><rect x="0.5" y="1.5" width="15" height="13" rx="1" fill="#e6e6e6" stroke="#444"/><path d="M1 3.5h14" stroke="#444" stroke-width="1.2"/><rect x="1" y="2" width="14" height="1.2" fill="#fff"/></svg>
<svg style="left:477px;top:346px" width="16" height="16" viewBox="0 0 16 16"><rect x="1.5" y="0.5" width="13" height="15" rx="1" fill="#fff" stroke="#444"/><path d="M2 5.5h12M2 10.5h12" stroke="#444"/></svg>
<svg style="left:496px;top:369px" width="16" height="16" viewBox="0 0 16 16"><rect x="0.5" y="1.5" width="15" height="13" rx="1" fill="#fff" stroke="#444"/><path d="M5.5 2v12M10.5 2v12" stroke="#444"/></svg>
<svg style="left:515px;top:392.5px" width="16" height="16" viewBox="0 0 16 16"><rect x="0.5" y="3.5" width="15" height="8.5" rx="1.2" fill="#cfcfcf" stroke="#444"/><text x="4" y="10" font-family="Liberation Sans" font-weight="bold" font-size="6" fill="#111">on</text></svg>
<svg style="left:515px;top:415.5px" width="16" height="16" viewBox="0 0 16 16"><rect x="0.5" y="3.5" width="15" height="8.5" rx="1.2" fill="#cfcfcf" stroke="#444"/><text x="4" y="10" font-family="Liberation Sans" font-weight="bold" font-size="6" fill="#111">on</text></svg>
<svg style="left:515px;top:438.5px" width="16" height="16" viewBox="0 0 16 16"><rect x="0.5" y="3.5" width="15" height="8.5" rx="1.2" fill="#f4f4f4" stroke="#444"/><text x="3.6" y="10" font-family="Liberation Sans" font-weight="bold" font-size="5.5" fill="#111">OK</text></svg>
<svg style="left:515px;top:461.5px" width="16" height="16" viewBox="0 0 16 16"><rect x="0.5" y="3.5" width="15" height="8.5" rx="1.2" fill="#f4f4f4" stroke="#444"/><text x="3.6" y="10" font-family="Liberation Sans" font-weight="bold" font-size="5.5" fill="#111">OK</text></svg>
<svg style="left:515px;top:484.5px" width="16" height="16" viewBox="0 0 16 16"><rect x="0.5" y="3.5" width="15" height="8.5" rx="1.2" fill="#cfcfcf" stroke="#444"/><text x="4" y="10" font-family="Liberation Sans" font-weight="bold" font-size="6" fill="#111">on</text></svg>
<svg style="left:515px;top:507.5px" width="16" height="16" viewBox="0 0 16 16"><rect x="0.5" y="3.5" width="15" height="8.5" rx="1.2" fill="#f4f4f4" stroke="#444"/><text x="3.6" y="10" font-family="Liberation Sans" font-weight="bold" font-size="5.5" fill="#111">OK</text></svg>
<svg style="left:496px;top:530px" width="16" height="16" viewBox="0 0 16 16"><rect x="0.5" y="0.5" width="15" height="15" rx="1.5" fill="#555"/><rect x="1.5" y="1.5" width="9.5" height="9.5" fill="#e6e6e6"/><rect x="12.3" y="2" width="2.4" height="2.4" fill="#fff"/><rect x="12.3" y="5.6" width="2.4" height="2" fill="#fff"/><rect x="12.3" y="8.6" width="2.4" height="2.4" fill="#fff"/><rect x="2" y="12.3" width="2.4" height="2.4" fill="#fff"/><rect x="5.6" y="12.3" width="2" height="2.4" fill="#fff"/><rect x="8.6" y="12.3" width="2.4" height="2.4" fill="#fff"/><rect x="12.3" y="12.3" width="2.4" height="2.4" fill="#ddd"/><rect x="12.9" y="2.6" width="1.2" height="1.2" fill="#333"/><rect x="12.9" y="9.2" width="1.2" height="1.2" fill="#333"/><rect x="2.6" y="12.9" width="1.2" height="1.2" fill="#333"/><rect x="9.2" y="12.9" width="1.2" height="1.2" fill="#333"/></svg>
<svg style="left:515px;top:553.5px" width="16" height="16" viewBox="0 0 16 16"><rect x="0.5" y="1.5" width="15" height="13" rx="1.5" fill="#fff" stroke="#444"/><path d="M3 4.5h10M3 6.5h10M3 8.5h10M3 10.5h5" stroke="#777" stroke-width="0.8"/></svg>
<svg style="left:496px;top:576.5px" width="16" height="16" viewBox="0 0 16 16"><text x="4.6" y="12.6" font-family="Liberation Serif" font-weight="bold" font-size="15" fill="#111">P</text><path d="M4.2 0.8v13.5" stroke="#333" stroke-width="0.9"/><path d="M3 1h2.4" stroke="#333" stroke-width="0.8"/><path d="M0.8 14.2l3.6 1.6M6.5 15.6l9-3.8" stroke="#333" stroke-width="1"/></svg>
<svg style="left:414px;top:639px" width="17" height="16" viewBox="0 0 16 16"><text x="4.6" y="12.6" font-family="Liberation Serif" font-weight="bold" font-size="15" fill="#111">P</text><path d="M4.2 0.8v13.5" stroke="#333" stroke-width="0.9"/><path d="M3 1h2.4" stroke="#333" stroke-width="0.8"/><path d="M0.8 14.2l3.6 1.6M6.5 15.6l9-3.8" stroke="#333" stroke-width="1"/></svg>
<div style="left:678px;top:671px;width:19px;height:13px;background:#fff;border:1px solid #ccc;border-bottom:none;"></div>
<svg style="left:680px;top:672px" width="15" height="12"><circle cx="8.5" cy="1.8" r="1.6" fill="#1a1acc"/><path d="M8 4v4.5h3.5l1.5 3.5M8 6.5h3M6 6a3.5 3.5 0 1 0 4.5 5" fill="none" stroke="#1a1acc" stroke-width="1.6"/></svg>
<svg style="left:693px;top:140px" width="7" height="7"><path d="M3.5 0.5L6.5 6H0.5z" fill="#c8bfb0"/></svg>
<svg style="left:693px;top:604px" width="7" height="7"><path d="M0.5 1H6.5L3.5 6.5z" fill="#555"/></svg>
<svg style="left:422px;top:622px" width="7" height="7"><path d="M6 0.5V6.5L0.5 3.5z" fill="#c8bfb0"/></svg>
<svg style="left:676px;top:622px" width="7" height="7"><path d="M1 0.5V6.5L6.5 3.5z" fill="#555"/></svg>
<div style="left:115px;top:470px;width:4px;height:1px;background:#d8cdbb;"></div>
<div style="left:115px;top:473px;width:4px;height:1px;background:#d8cdbb;"></div>
<div style="left:115px;top:476px;width:4px;height:1px;background:#d8cdbb;"></div>
<div style="left:410px;top:470px;width:4px;height:1px;background:#d8cdbb;"></div>
<div style="left:410px;top:473px;width:4px;height:1px;background:#d8cdbb;"></div>
<div style="left:410px;top:476px;width:4px;height:1px;background:#d8cdbb;"></div>
<div style="left:693px;top:368px;width:6px;height:1px;background:#cdbfa8;"></div>
<div style="left:103px;top:336px;width:6px;height:1px;background:#cdbfa8;"></div>
<div style="left:532px;top:622px;width:1px;height:6px;background:#bfb19a;"></div>
<div style="left:556px;top:634px;width:1px;height:4px;background:#d3c8b5;"></div>
<div style="left:693px;top:371px;width:6px;height:1px;background:#cdbfa8;"></div>
<div style="left:103px;top:339px;width:6px;height:1px;background:#cdbfa8;"></div>
<div style="left:535px;top:622px;width:1px;height:6px;background:#bfb19a;"></div>
<div style="left:559px;top:634px;width:1px;height:4px;background:#d3c8b5;"></div>
<div style="left:693px;top:374px;width:6px;height:1px;background:#cdbfa8;"></div>
<div style="left:103px;top:342px;width:6px;height:1px;background:#cdbfa8;"></div>
<div style="left:538px;top:622px;width:1px;height:6px;background:#bfb19a;"></div>
<div style="left:562px;top:634px;width:1px;height:4px;background:#d3c8b5;"></div>
<div style="left:702px;top:0px;width:4px;height:2px;background:#e8e6e0;"></div>
<div style="left:705px;top:0px;width:2px;height:2px;background:#d08050;"></div>
<div style="left:706px;top:2px;width:1px;height:3px;background:#3a70b0;"></div>
</body></html>
